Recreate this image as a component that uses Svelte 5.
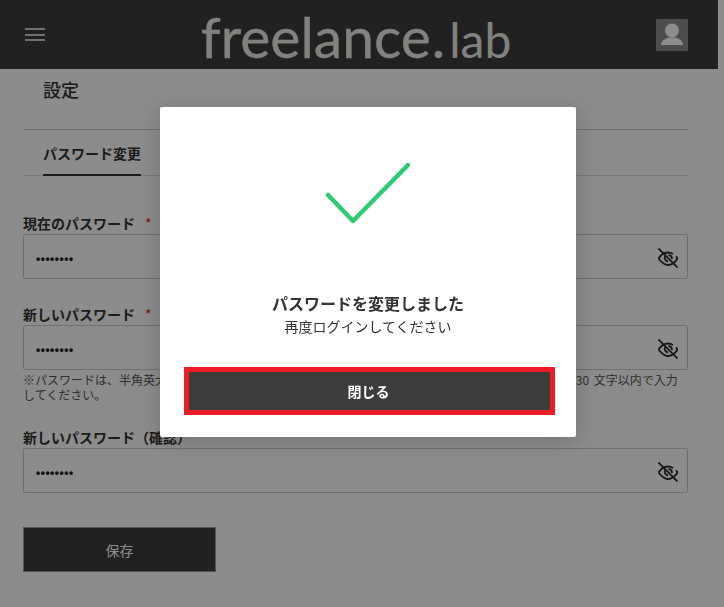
<script>
  const fields = [
    { label: "現在のパスワード", hint: false },
    { label: "新しいパスワード", hint: true },
    { label: "新しいパスワード（確認）", hint: false },
  ];
</script>

<div class="page">
  <header class="topbar">
    <button class="menu" aria-label="メニュー">
      <span></span><span></span><span></span>
    </button>
    <div class="logo">freelance<span class="dot">.</span><span class="lab">lab</span></div>
    <div class="avatar">
      <svg viewBox="0 0 32 32" width="32" height="32">
        <circle cx="16" cy="11.5" r="7" fill="#fff" />
        <path d="M5 26c0-5 5-7.500 11-7.500s11 2.500 11 7.500z" fill="#fff" />
      </svg>
    </div>
  </header>

  <main class="content">
    <h1>設定</h1>
    <nav class="tabs">
      <span class="tab">パスワード変更</span>
    </nav>

    <div class="fields">
      {#each fields as f}
        <div class="field">
          <label>{f.label}<span class="req">*</span></label>
          <div class="input">
            <span class="dots">••••••••</span>
            <svg class="eye" viewBox="0 0 20 20" width="20" height="20" fill="none" stroke="#2a2a2a" stroke-width="1.8">
              <path d="M0.500 10.500c2.500-4 5.500-6 9.500-6 1.500 0 3.500 0.500 5 1.500M18 8.500c0.600 0.600 1.100 1.300 1.500 2-2.500 4-5.500 6.500-9.500 6.500-3.500 0-6.500-2.500-9.500-6.500" />
              <path d="M7 8c-1 2.500 0.500 5 3 5.500M10.500 7c2 0.300 3.500 2 3.500 4" />
              <path d="M0.500 0.500l19 19" />
            </svg>
          </div>
          {#if f.hint}
            <p class="hint">※パスワードは、半角英大文字、半角英小文字、半角数字、記号のうち 3 種類以上を含む 8 文字以上 30 文字以内で入力してください。</p>
          {/if}
        </div>
      {/each}
    </div>

    <button class="save">保存</button>
  </main>
</div>

<div class="overlay">
  <div class="modal">
    <svg class="check" viewBox="0 0 88 64" width="88" height="64" fill="none" stroke="#2ecc71" stroke-width="4.5" stroke-linecap="round" stroke-linejoin="round">
      <path d="M4 32l25 26L84 2" />
    </svg>
    <p class="title">パスワードを変更しました</p>
    <p class="sub">再度ログインしてください</p>
    <button class="close">閉じる</button>
  </div>
</div>

<style>
  :global(body) {
    margin: 0;
    background: #fff;
    font-family: "Noto Sans CJK JP", "Noto Sans", sans-serif;
    color: #333;
    overflow: hidden;
  }
  .page {
    width: 718px;
    height: 607px;
  }
  .topbar {
    height: 69px;
    background: #3c3c3c;
    display: flex;
    align-items: center;
    justify-content: space-between;
    padding: 0 30px 0 25px;
  }
  .menu {
    width: 20px;
    height: 13px;
    padding: 0;
    border: 0;
    background: none;
    display: flex;
    flex-direction: column;
    justify-content: space-between;
  }
  .menu span {
    height: 2px;
    background: #ccc;
  }
  .logo {
    font-family: Lato, sans-serif;
    font-size: 57px;
    line-height: 69px;
    padding-top: 2px;
    height: 67px;
    color: #ecebe4;
    -webkit-text-stroke: 0.3px #ecebe4;
    margin-left: 11px;
    white-space: nowrap;
  }
  .logo .dot {
    margin: 0 4px 0 1px;
  }
  .logo .lab {
    font-size: 48px;
    -webkit-text-stroke: 0;
  }
  .avatar {
    width: 32px;
    height: 32px;
    background: #8c8c8c;
  }
  .avatar svg {
    display: block;
  }
  .content {
    padding: 0 30px 0 23px;
  }
  h1 {
    margin: 0;
    padding: 6px 20px 25px;
    font-size: 18px;
    line-height: 29px;
    font-weight: 500;
    border-bottom: 1px solid #ccc;
  }
  .tabs {
    height: 46px;
    box-sizing: border-box;
    border-bottom: 1px solid #ddd;
    padding-left: 20px;
  }
  .tab {
    display: inline-block;
    height: 46px;
    box-sizing: border-box;
    border-bottom: 2px solid #333;
    font-size: 14px;
    font-weight: 700;
    line-height: 47px;
  }
  .fields {
    display: flex;
    flex-direction: column;
    gap: 26px;
    margin-top: 38px;
  }
  label {
    display: block;
    font-size: 14px;
    font-weight: 700;
    line-height: 18px;
    padding-bottom: 2px;
  }
  .req {
    color: #e02020;
    margin-left: 10px;
    font-weight: 400;
  }
  .input {
    height: 45px;
    box-sizing: border-box;
    border: 1px solid #ccc;
    border-radius: 2px;
    display: flex;
    align-items: center;
    justify-content: space-between;
    padding: 0 9px 0 12px;
  }
  .eye {
    margin-top: 2px;
  }
  .dots {
    font-size: 12px;
    font-family: "Liberation Sans", sans-serif;
    font-weight: 700;
    letter-spacing: 0.5px;
    color: #222;
    padding-top: 4px;
  }
  .hint {
    margin: 2px 0 0;
    font-size: 12px;
    line-height: 15px;
    word-spacing: 2px;
    color: #555;
  }
  .save {
    display: block;
    margin-top: 34px;
    width: 193px;
    height: 45px;
    background: #3c3c3c;
    color: #fff;
    border: 1px solid #999;
    font: inherit;
    font-size: 14px;
  }
  .overlay {
    position: fixed;
    inset: 0;
    background: rgba(0, 0, 0, 0.45);
  }
  .modal {
    position: absolute;
    left: 160px;
    top: 107px;
    width: 416px;
    height: 330px;
    box-sizing: border-box;
    background: #fff;
    border-radius: 2px;
    padding: 56px 21px 0;
    display: flex;
    flex-direction: column;
    align-items: center;
    box-shadow: 0 4px 24px rgba(0, 0, 0, 0.2);
  }
  .check {
    display: block;
  }
  .title {
    margin: 65px 0 0;
    font-size: 16px;
    font-weight: 700;
    line-height: 22px;
  }
  .sub {
    margin: 1px 0 0;
    font-size: 14px;
    line-height: 22px;
  }
  .close {
    align-self: flex-end;
    margin-top: 30px;
    width: 371px;
    height: 48px;
    box-sizing: border-box;
    padding: 0 2px 0 0;
    background: #3c3c3c;
    color: #fff;
    border: 5px solid #ee1c25;
    font: inherit;
    font-size: 14px;
    font-weight: 700;
  }
</style>
